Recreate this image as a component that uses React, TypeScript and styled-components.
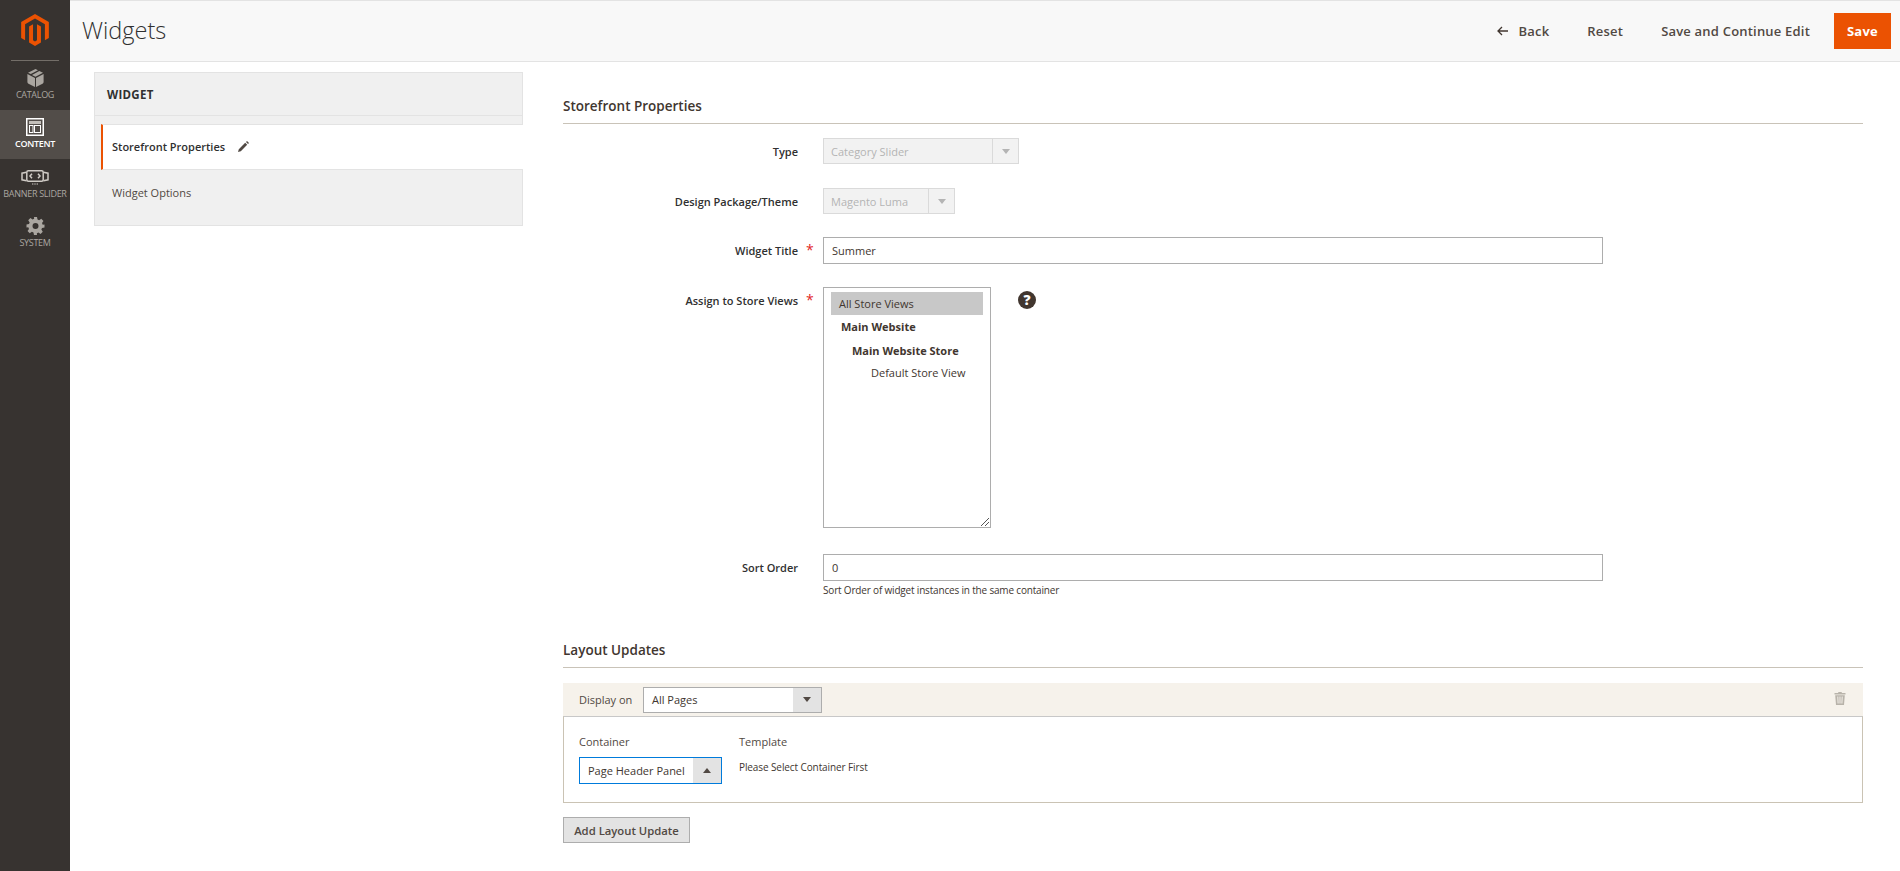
import React from 'react';
import styled, { createGlobalStyle } from 'styled-components';

const Global = createGlobalStyle`
  html, body { margin: 0; padding: 0; background: #fff; }
  body { font-family: "Open Sans", "Liberation Sans", sans-serif; color: #41362f; font-size: 11px; }
  * { box-sizing: border-box; }
`;

const Page = styled.div`
  display: flex;
  width: 1900px;
  height: 871px;
  overflow: hidden;
`;

const Sidebar = styled.nav`
  width: 70px;
  flex: none;
  background: #373330;
  display: flex;
  flex-direction: column;
`;

const LogoBox = styled.div`
  height: 61px;
  margin: 0 11px;
  padding-top: 14px;
  border-bottom: 1px solid #736e68;
  display: flex;
  justify-content: center;
`;

const MenuItem = styled.div<{ $active?: boolean; $tall?: boolean }>`
  height: ${p => (p.$tall ? 50 : 49)}px;
  padding-top: ${p => (p.$tall ? 9 : 8)}px;
  display: flex;
  flex-direction: column;
  align-items: center;
  background: ${p => (p.$active ? '#524d49' : 'transparent')};
  color: ${p => (p.$active ? '#ffffff' : '#aaa6a0')};
`;

const MenuIcon = styled.div`
  height: 18px;
  display: flex;
  align-items: center;
  justify-content: center;
`;

const MenuLabel = styled.span<{ $active?: boolean }>`
  margin-top: 1px;
  font-size: 9px;
  line-height: 14px;
  white-space: nowrap;
  font-weight: ${p => (p.$active ? 600 : 400)};
  letter-spacing: -0.3px;
`;

const Body = styled.div`
  flex: 1;
  min-width: 0;
  display: flex;
  flex-direction: column;
`;

const Header = styled.header`
  height: 62px;
  flex: none;
  background: #f8f8f8;
  border-top: 1px solid #e3e3e3;
  border-bottom: 1px solid #e3e3e3;
  display: flex;
  align-items: center;
  padding: 0 9px 0 12px;
`;

const Title = styled.h1`
  margin: 0;
  padding-bottom: 2px;
  font-size: 23.5px;
  font-weight: 300;
  color: #303030;
  flex: 1;
`;

const HeaderButton = styled.button<{ $ml: number }>`
  border: 0;
  background: none;
  padding: 0;
  margin-left: ${p => p.$ml}px;
  display: flex;
  align-items: center;
  gap: 11px;
  font: 600 13px "Open Sans", sans-serif;
  letter-spacing: 0.2px;
  color: #514943;
`;

const SaveButton = styled.button`
  width: 57px;
  height: 36px;
  margin-left: 24px;
  border: 0;
  background: #eb5202;
  color: #fff;
  font: 700 13px "Open Sans", sans-serif;
  letter-spacing: 0.25px;
`;

const Columns = styled.div`
  display: flex;
  padding-left: 24px;
`;

const Aside = styled.aside`
  width: 429px;
  flex: none;
  margin-top: 10px;
`;

const TabsPanel = styled.div`
  height: 154px;
  background: #f0f0f0;
  border: 1px solid #e3e3e3;
  display: flex;
  flex-direction: column;
`;

const TabsTitle = styled.div`
  height: 43px;
  flex: none;
  padding-left: 12px;
  display: flex;
  align-items: center;
  font-size: 11.5px;
  font-weight: 700;
  letter-spacing: 0.3px;
  color: #303030;
  border-bottom: 1px solid #e3e3e3;
`;

const TabsStrip = styled.div`
  height: 8px;
  flex: none;
`;

const ActiveTab = styled.div`
  height: 46px;
  flex: none;
  margin: 0 -1px 0 6px;
  padding: 0 0 2px 9px;
  background: #fff;
  border-top: 1px solid #e3e3e3;
  border-bottom: 1px solid #e3e3e3;
  border-left: 2px solid #eb5202;
  display: flex;
  align-items: center;
  gap: 13px;
  font-size: 11px;
  font-weight: 600;
  color: #303030;
`;

const Tab = styled.div`
  padding: 15px 0 0 17px;
  font-size: 11px;
  color: #514943;
`;

const Main = styled.main`
  width: 1300px;
  flex: none;
  margin-left: 40px;
  padding-top: 34px;
`;

const SectionTitle = styled.h2<{ $mt?: number }>`
  margin: ${p => p.$mt ?? 0}px 0 0;
  height: 28px;
  line-height: 20px;
  font-size: 13.5px;
  font-weight: 600;
  color: #41362f;
  border-bottom: 1px solid #c9c3b8;
`;

const Row = styled.div<{ $mt: number }>`
  display: flex;
  margin-top: ${p => p.$mt}px;
`;

const FieldLabel = styled.label`
  width: 235px;
  height: 26px;
  flex: none;
  text-align: right;
  font-size: 11px;
  font-weight: 600;
  color: #303030;
  line-height: 28px;
`;

const Star = styled.span<{ $show?: boolean }>`
  width: 25px;
  height: 26px;
  flex: none;
  padding-left: 8px;
  color: #e22626;
  font-size: 14px;
  line-height: 26px;
  visibility: ${p => (p.$show ? 'visible' : 'hidden')};
`;

const SelectBox = styled.div<{ $w: number; $h?: number; $disabled?: boolean; $focus?: boolean }>`
  width: ${p => p.$w}px;
  height: ${p => p.$h ?? 26}px;
  display: flex;
  flex: none;
  border: 1px solid ${p => (p.$focus ? '#007bdb' : p.$disabled ? '#dadada' : '#adadad')};
  background: ${p => (p.$disabled ? '#f2f2f2' : '#fff')};
  color: ${p => (p.$disabled ? '#b4b4b4' : '#41362f')};
  font-size: 11px;
`;

const SelectText = styled.span<{ $disabled?: boolean }>`
  flex: 1;
  padding-left: ${p => (p.$disabled ? 7 : 8)}px;
  display: flex;
  align-items: center;
  white-space: nowrap;
  overflow: hidden;
`;

const SelectCaret = styled.span<{ $disabled?: boolean; $up?: boolean }>`
  width: ${p => (p.$disabled ? 26 : 28)}px;
  flex: none;
  display: flex;
  align-items: center;
  justify-content: center;
  background: ${p => (p.$disabled ? 'transparent' : '#e3e3e3')};
  border-left: ${p => (p.$disabled ? '1px solid #dadada' : '0')};
  &::after {
    content: '';
    border-left: 4px solid transparent;
    border-right: 4px solid transparent;
    ${p => (p.$up ? 'border-bottom' : 'border-top')}: 5px solid ${p => (p.$disabled ? '#b4b4b4' : '#514943')};
  }
`;

const TextInput = styled.input`
  width: 780px;
  height: 27px;
  border: 1px solid #adadad;
  padding: 0 8px;
  font: 400 11px "Open Sans", sans-serif;
  color: #41362f;
  background: #fff;
  outline: 0;
  display: block;
`;

const StoreList = styled.div`
  position: relative;
  width: 168px;
  height: 241px;
  flex: none;
  border: 1px solid #adadad;
  padding: 4px 7px;
  font-size: 11px;
  color: #41362f;
`;

const StoreOption = styled.div<{ $selected?: boolean; $bold?: boolean; $indent?: number; $after?: number }>`
  height: ${p => (p.$selected ? 23 : 20)}px;
  line-height: ${p => (p.$selected ? 23 : 20)}px;
  padding-left: ${p => p.$indent ?? 8}px;
  margin-bottom: ${p => p.$after ?? 2}px;
  background: ${p => (p.$selected ? '#c8c8c8' : 'transparent')};
  font-weight: ${p => (p.$bold ? 700 : 400)};
  white-space: nowrap;
`;

const ResizeGrip = styled.svg`
  position: absolute;
  right: 0;
  bottom: 0;
`;

const HelpIcon = styled.svg`
  margin: 4px 0 0 27px;
  flex: none;
`;

const FieldNote = styled.div`
  margin: 2px 0 0 260px;
  line-height: 14px;
  font-size: 10px;
  letter-spacing: -0.18px;
  color: #41362f;
`;

const DisplayBar = styled.div`
  margin-top: 15px;
  height: 33px;
  background: #f6f2eb;
  display: flex;
  align-items: center;
  padding: 0 17px 0 16px;
`;

const BarLabel = styled.span`
  width: 64px;
  font-size: 11px;
  color: #514943;
`;

const TrashIcon = styled.svg`
  margin: -3px 0 0 auto;
`;

const UpdateBox = styled.div`
  height: 87px;
  border: 1px solid #cac3b4;
  border-top-color: #c8c8c8;
  padding: 17px 15px 0;
  display: flex;
  gap: 17px;
`;

const UpdateColumn = styled.div`
  display: flex;
  flex-direction: column;
`;

const ColumnLabel = styled.div`
  line-height: 16px;
  font-size: 11px;
  color: #514943;
  margin-bottom: 7px;
`;

const Hint = styled.div`
  font-size: 10px;
  letter-spacing: -0.1px;
  line-height: 14px;
  color: #41362f;
  margin-top: 3px;
`;

const AddButton = styled.button`
  display: block;
  margin-top: 14px;
  width: 127px;
  height: 26px;
  padding: 0;
  background: #e3e3e3;
  border: 1px solid #adadad;
  font: 600 11.3px "Open Sans", sans-serif;
  color: #514943;
`;

const CatalogIcon = () => (
  <svg width="17" height="18" viewBox="0 0 17 18" fill="currentColor">
    <path d="M8.500 0 11 1.300 3.800 5.100 1 3.800zM12.300 2 16 3.800 8.500 7.800 5 6z" />
    <path d="M0.400 5.100 8 9v9L1.500 14.800Q.4 14.200.4 13zM16.600 5.100V13q0 1.200-1.100 1.800L9 18V9z" />
  </svg>
);

const ContentIcon = () => (
  <svg width="18" height="18" viewBox="0 0 18 18" fill="none" stroke="currentColor">
    <rect x="0.750" y="0.750" width="16.500" height="16.500" strokeWidth="1.500" />
    <rect x="3" y="3" width="12" height="3" fill="#c4c0bb" stroke="none" />
    <rect x="3.500" y="7.500" width="3.500" height="7" strokeWidth="1" />
    <rect x="8.500" y="7.500" width="6" height="7" strokeWidth="1" />
  </svg>
);

const BannerIcon = () => (
  <svg width="28" height="16" viewBox="0 -1 28 16" fill="none" stroke="#cfcbc5">
    <rect x="5.800" y="0.800" width="16.400" height="10.400" rx="1.500" strokeWidth="1.500" />
    <path d="M5.500 2.200 1 3.200v6.600l4.500 1M22.500 2.200l4.500 1v6.600l-4.500 1" strokeWidth="1.500" />
    <path d="M11 3.800 9 6l2 2.200M17 3.800 19 6l-2 2.200" strokeWidth="1.500" />
    <path d="M11 14h1.400M13.300 14h1.400M15.600 14H17" strokeWidth="1.200" />
  </svg>
);

const GearIcon = () => (
  <svg width="19" height="18" viewBox="0 0 24 24" fill="currentColor">
    <path fillRule="evenodd" d="M10 0h4l.7 3.300 2.100.9 2.900-1.900 2.900 2.900-1.900 2.900.9 2.100L24 10v4l-3.300.7-.9 2.100 1.900 2.900-2.900 2.900-2.900-1.900-2.100.9L14 24h-4l-.7-3.300-2.100-.9-2.900 1.900-2.900-2.900 1.900-2.900-.9-2.100L0 14v-4l3.300-.7.9-2.100L2.300 4.300l2.900-2.900 2.900 1.900 2.100-.9zM12 8a4 4 0 1 0 0 8 4 4 0 0 0 0-8z" />
  </svg>
);

const MagentoLogo = () => (
  <svg width="32" height="32" viewBox="0 0 24 24" fill="#eb5202">
    <path d="M12 24l-4.455-2.572v-12l2.970-1.715v12.001L12 20.573l1.485-.859V7.713l2.970 1.715v12L12 24zM22.391 6v12l-2.969 1.714V7.713L12 3.430 4.574 7.713v12L1.609 18V6L12 0l10.391 6z" />
  </svg>
);

const BackArrow = () => (
  <svg width="11" height="10" viewBox="0 0 11 10" fill="none" stroke="#41362f" strokeWidth="1.300">
    <path d="M11 5H1.200M5 1 1 5l4 4" />
  </svg>
);

const Pencil = () => (
  <svg width="11" height="11" viewBox="0 0 11 11" fill="#514943">
    <path d="M0 11l.8-2.800L7.200 1.800l2 2L2.800 10.200zM8 1l1-1 2 2-1 1z" />
  </svg>
);

const App = () => (
  <Page>
    <Global />
    <Sidebar>
      <LogoBox><MagentoLogo /></LogoBox>
      <MenuItem><MenuIcon><CatalogIcon /></MenuIcon><MenuLabel>CATALOG</MenuLabel></MenuItem>
      <MenuItem $active><MenuIcon><ContentIcon /></MenuIcon><MenuLabel $active>CONTENT</MenuLabel></MenuItem>
      <MenuItem $tall><MenuIcon><BannerIcon /></MenuIcon><MenuLabel>BANNER SLIDER</MenuLabel></MenuItem>
      <MenuItem><MenuIcon><GearIcon /></MenuIcon><MenuLabel>SYSTEM</MenuLabel></MenuItem>
    </Sidebar>
    <Body>
      <Header>
        <Title>Widgets</Title>
        <HeaderButton $ml={0}><BackArrow />Back</HeaderButton>
        <HeaderButton $ml={38}>Reset</HeaderButton>
        <HeaderButton $ml={38}>Save and Continue Edit</HeaderButton>
        <SaveButton>Save</SaveButton>
      </Header>
      <Columns>
        <Aside>
          <TabsPanel>
            <TabsTitle>WIDGET</TabsTitle>
            <TabsStrip />
            <ActiveTab>Storefront Properties <Pencil /></ActiveTab>
            <Tab>Widget Options</Tab>
          </TabsPanel>
        </Aside>
        <Main>
          <SectionTitle>Storefront Properties</SectionTitle>
          <Row $mt={14}>
            <FieldLabel>Type</FieldLabel><Star>*</Star>
            <SelectBox $w={196} $disabled><SelectText $disabled>Category Slider</SelectText><SelectCaret $disabled /></SelectBox>
          </Row>
          <Row $mt={24}>
            <FieldLabel>Design Package/Theme</FieldLabel><Star>*</Star>
            <SelectBox $w={132} $disabled><SelectText $disabled>Magento Luma</SelectText><SelectCaret $disabled /></SelectBox>
          </Row>
          <Row $mt={23}>
            <FieldLabel>Widget Title</FieldLabel><Star $show>*</Star>
            <TextInput defaultValue="Summer" readOnly />
          </Row>
          <Row $mt={23}>
            <FieldLabel>Assign to Store Views</FieldLabel><Star $show>*</Star>
            <StoreList>
              <StoreOption $selected>All Store Views</StoreOption>
              <StoreOption $bold $indent={10} $after={4}>Main Website</StoreOption>
              <StoreOption $bold $indent={21}>Main Website Store</StoreOption>
              <StoreOption $indent={40}>Default Store View</StoreOption>
              <ResizeGrip width="10" height="10" viewBox="0 0 10 10" stroke="#555" fill="none">
                <path d="M1 9 9 1M5 9 9 5" />
              </ResizeGrip>
            </StoreList>
            <HelpIcon width="18" height="18" viewBox="0 0 18 18">
              <circle cx="9" cy="9" r="9" fill="#41362f" />
              <text x="9" y="14" textAnchor="middle" fontSize="14" fontWeight="800" fontFamily="Open Sans" fill="#fff">?</text>
            </HelpIcon>
          </Row>
          <Row $mt={26}>
            <FieldLabel>Sort Order</FieldLabel><Star>*</Star>
            <TextInput defaultValue="0" readOnly />
          </Row>
          <FieldNote>Sort Order of widget instances in the same container</FieldNote>
          <SectionTitle $mt={43}>Layout Updates</SectionTitle>
          <DisplayBar>
            <BarLabel>Display on</BarLabel>
            <SelectBox $w={179}><SelectText>All Pages</SelectText><SelectCaret /></SelectBox>
            <TrashIcon width="12" height="13" viewBox="0 0 12 13" fill="#b8b3aa">
              <path d="M4.500 0h3l.5 1h3.500v1.500H.5V1H4zM1.200 3.200h9.600L10 13H2zM3.300 4.500l.3 7h1l-.3-7zM5.500 4.500v7h1v-7zM7.700 4.500l-.3 7h1l.3-7z" fillRule="evenodd" />
            </TrashIcon>
          </DisplayBar>
          <UpdateBox>
            <UpdateColumn>
              <ColumnLabel>Container</ColumnLabel>
              <SelectBox $w={143} $h={27} $focus><SelectText>Page Header Panel</SelectText><SelectCaret $up /></SelectBox>
            </UpdateColumn>
            <UpdateColumn>
              <ColumnLabel>Template</ColumnLabel>
              <Hint>Please Select Container First</Hint>
            </UpdateColumn>
          </UpdateBox>
          <AddButton>Add Layout Update</AddButton>
        </Main>
      </Columns>
    </Body>
  </Page>
);

export default App;
